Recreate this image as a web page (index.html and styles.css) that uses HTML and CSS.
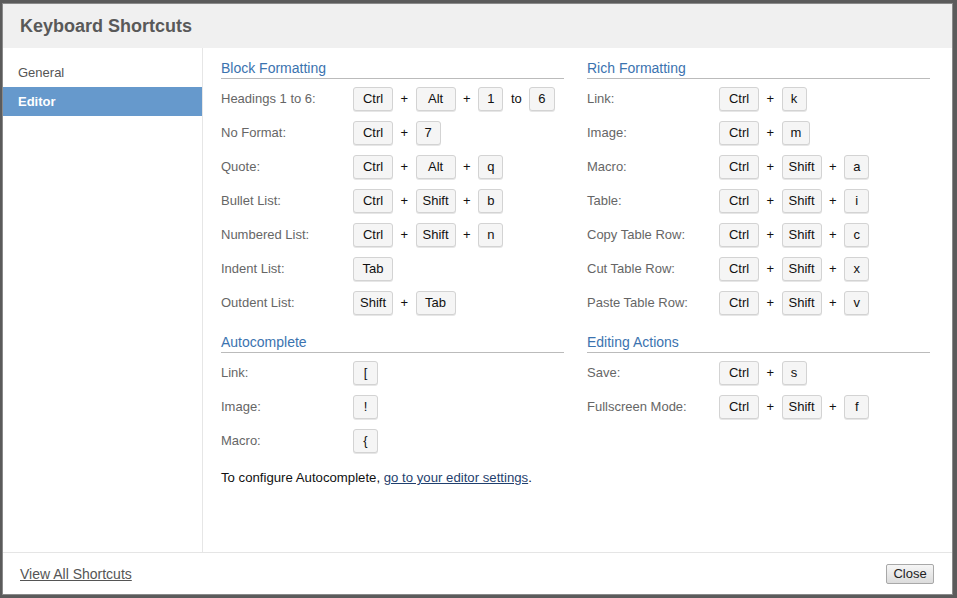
FILE: index.html
```html
<!DOCTYPE html>
<html>
<head>
<meta charset="utf-8">
<link rel="stylesheet" href="styles.css">
</head>
<body>
<div class="dialog">
  <div class="dlg-header"><h1 class="dlg-title">Keyboard Shortcuts</h1></div>
  <div class="dlg-main">
    <ul class="nav">
      <li class="nav-item">General</li>
      <li class="nav-item active">Editor</li>
    </ul>
    <div class="panel">
      <div class="col">
        <section class="sec">
          <h2 class="sec-title">Block Formatting</h2>
          <div class="row"><span class="lbl">Headings 1 to 6:</span><span class="keys"><kbd class="k w">Ctrl</kbd><span class="sep">+</span><kbd class="k w">Alt</kbd><span class="sep">+</span><kbd class="k">1</kbd><span class="sep">to</span><kbd class="k">6</kbd></span></div>
          <div class="row"><span class="lbl">No Format:</span><span class="keys"><kbd class="k w">Ctrl</kbd><span class="sep">+</span><kbd class="k">7</kbd></span></div>
          <div class="row"><span class="lbl">Quote:</span><span class="keys"><kbd class="k w">Ctrl</kbd><span class="sep">+</span><kbd class="k w">Alt</kbd><span class="sep">+</span><kbd class="k">q</kbd></span></div>
          <div class="row"><span class="lbl">Bullet List:</span><span class="keys"><kbd class="k w">Ctrl</kbd><span class="sep">+</span><kbd class="k w">Shift</kbd><span class="sep">+</span><kbd class="k">b</kbd></span></div>
          <div class="row"><span class="lbl">Numbered List:</span><span class="keys"><kbd class="k w">Ctrl</kbd><span class="sep">+</span><kbd class="k w">Shift</kbd><span class="sep">+</span><kbd class="k">n</kbd></span></div>
          <div class="row"><span class="lbl">Indent List:</span><span class="keys"><kbd class="k w">Tab</kbd></span></div>
          <div class="row"><span class="lbl">Outdent List:</span><span class="keys"><kbd class="k w">Shift</kbd><span class="sep">+</span><kbd class="k w">Tab</kbd></span></div>
        </section>
        <section class="sec sec2">
          <h2 class="sec-title">Autocomplete</h2>
          <div class="row"><span class="lbl">Link:</span><span class="keys"><kbd class="k">[</kbd></span></div>
          <div class="row"><span class="lbl">Image:</span><span class="keys"><kbd class="k">!</kbd></span></div>
          <div class="row"><span class="lbl">Macro:</span><span class="keys"><kbd class="k">{</kbd></span></div>
          <p class="note">To configure Autocomplete, <a class="note-link" href="#">go to your editor settings</a>.</p>
        </section>
      </div>
      <div class="col">
        <section class="sec">
          <h2 class="sec-title">Rich Formatting</h2>
          <div class="row"><span class="lbl">Link:</span><span class="keys"><kbd class="k w">Ctrl</kbd><span class="sep">+</span><kbd class="k">k</kbd></span></div>
          <div class="row"><span class="lbl">Image:</span><span class="keys"><kbd class="k w">Ctrl</kbd><span class="sep">+</span><kbd class="k">m</kbd></span></div>
          <div class="row"><span class="lbl">Macro:</span><span class="keys"><kbd class="k w">Ctrl</kbd><span class="sep">+</span><kbd class="k w">Shift</kbd><span class="sep">+</span><kbd class="k">a</kbd></span></div>
          <div class="row"><span class="lbl">Table:</span><span class="keys"><kbd class="k w">Ctrl</kbd><span class="sep">+</span><kbd class="k w">Shift</kbd><span class="sep">+</span><kbd class="k">i</kbd></span></div>
          <div class="row"><span class="lbl">Copy Table Row:</span><span class="keys"><kbd class="k w">Ctrl</kbd><span class="sep">+</span><kbd class="k w">Shift</kbd><span class="sep">+</span><kbd class="k">c</kbd></span></div>
          <div class="row"><span class="lbl">Cut Table Row:</span><span class="keys"><kbd class="k w">Ctrl</kbd><span class="sep">+</span><kbd class="k w">Shift</kbd><span class="sep">+</span><kbd class="k">x</kbd></span></div>
          <div class="row"><span class="lbl">Paste Table Row:</span><span class="keys"><kbd class="k w">Ctrl</kbd><span class="sep">+</span><kbd class="k w">Shift</kbd><span class="sep">+</span><kbd class="k">v</kbd></span></div>
        </section>
        <section class="sec sec2">
          <h2 class="sec-title">Editing Actions</h2>
          <div class="row"><span class="lbl">Save:</span><span class="keys"><kbd class="k w">Ctrl</kbd><span class="sep">+</span><kbd class="k">s</kbd></span></div>
          <div class="row"><span class="lbl">Fullscreen Mode:</span><span class="keys"><kbd class="k w">Ctrl</kbd><span class="sep">+</span><kbd class="k w">Shift</kbd><span class="sep">+</span><kbd class="k">f</kbd></span></div>
        </section>
      </div>
    </div>
  </div>
  <div class="dlg-footer">
    <a class="all-link" href="#">View All Shortcuts</a>
    <button class="close-btn" type="button">Close</button>
  </div>
</div>
</body>
</html>
```
FILE: styles.css
```css
* { box-sizing: border-box; }
html, body { margin: 0; height: 100%; }
body {
  background: #5b5b5b;
  font-family: "Liberation Sans", Arial, sans-serif;
  font-size: 13px;
  padding: 4px 0 0 3px;
  overflow: hidden;
}
.dialog {
  width: 949px;
  height: 590px;
  background: #fff;
  display: flex;
  flex-direction: column;
  box-shadow: 0 0 0 1px #8a8a8a;
}
.dlg-header {
  height: 44px;
  background: #f0f0f0;
  display: flex;
  align-items: center;
  padding-left: 17px;
}
.dlg-title {
  margin: 0;
  font-size: 18px;
  font-weight: bold;
  color: #595959;
  line-height: 22px;
}
.dlg-main {
  flex: 1;
  display: flex;
  min-height: 0;
}
.nav {
  list-style: none;
  margin: 0;
  padding: 10px 0 0;
  width: 200px;
  border-right: 1px solid #e6e6e6;
}
.nav-item {
  height: 29px;
  line-height: 29px;
  padding-left: 15px;
  color: #555;
}
.nav-item.active {
  background: #6699cc;
  color: #fff;
  font-weight: bold;
}
.panel {
  flex: 1;
  display: flex;
  gap: 23px;
  padding: 12px 0 0 18px;
}
.col { width: 343px; }
.sec-title {
  margin: 0 0 2.5px;
  font-size: 14px;
  font-weight: normal;
  line-height: 16px;
  color: #3b73af;
  padding-bottom: 2px;
  border-bottom: 1px solid #bbb;
}
.sec2 { margin-top: 14.5px; }
.row {
  height: 34px;
  display: flex;
  align-items: center;
}
.lbl {
  width: 132px;
  flex: none;
  color: #666;
}
.keys {
  display: flex;
  align-items: center;
  gap: 7.5px;
  color: #111;
}
.k {
  font-family: "Liberation Sans", Arial, sans-serif;
  font-size: 13px;
  display: inline-block;
  min-width: 25px;
  height: 24px;
  line-height: 22px;
  padding: 0 8px;
  text-align: center;
  color: #111;
  background: #f5f5f5;
  border: 1px solid #d3d3d3;
  border-radius: 3px;
  box-shadow: 0 1px 0 #e6e6e6;
}
.k.w { width: 40px; padding: 0; }
.sep { color: #111; }
.note {
  margin: 11.5px 0 0;
  line-height: 17px;
  font-size: 13.2px;
  color: #111;
}
.note-link { color: #1f3f6e; text-decoration: underline; }
.dlg-footer {
  height: 42px;
  border-top: 1px solid #e5e5e5;
  display: flex;
  align-items: center;
  justify-content: space-between;
  padding: 0 18px 0 17px;
}
.all-link {
  font-size: 14px;
  color: #555;
  text-decoration: underline;
}
.close-btn {
  font-family: "Liberation Sans", Arial, sans-serif;
  font-size: 13px;
  height: 20px;
  width: 48px;
  padding: 0;
  color: #222;
  background: linear-gradient(#f6f6f6, #dcdcdc);
  border: 1px solid #a8a8a8;
  border-radius: 2px;
}
```
